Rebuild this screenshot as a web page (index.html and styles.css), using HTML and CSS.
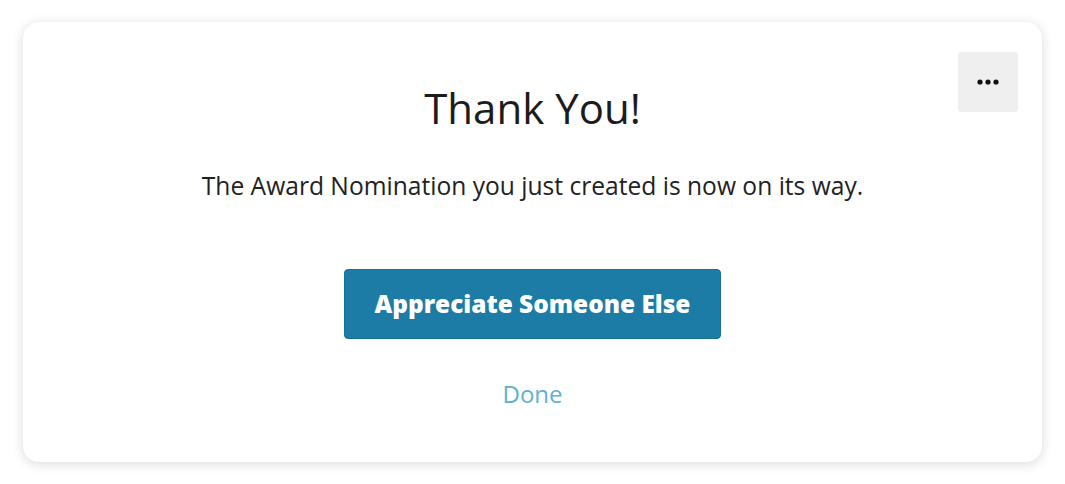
FILE: index.html
```html
<!DOCTYPE html>
<html lang="en">
<head>
  <meta charset="UTF-8">
  <title>Thank You</title>
  <link rel="stylesheet" href="styles.css">
</head>
<body>

  <!-- Confirmation Card -->
  <div class="card">
    <button class="menu-btn" aria-label="More options">
      <svg width="22" height="6" viewBox="0 0 22 6">
        <circle cx="3" cy="3" r="2.6" fill="#111"/>
        <circle cx="11" cy="3" r="2.6" fill="#111"/>
        <circle cx="19" cy="3" r="2.6" fill="#111"/>
      </svg>
    </button>

    <h1 class="title">Thank You!</h1>
    <p class="message">The Award Nomination you just created is now on its way.</p>

    <button class="primary-btn">Appreciate Someone Else</button>
    <a class="done-link" href="#">Done</a>
  </div>

</body>
</html>
```

FILE: styles.css
```css
/* Basic Styling */
* {
  box-sizing: border-box;
}
body {
  margin: 0;
  padding: 22px 23px;
  background-color: #fff;
  font-family: "Open Sans", Arial, sans-serif;
  color: #222;
}

/* Card */
.card {
  position: relative;
  width: 1019px;
  height: 440px;
  background-color: #fff;
  border-radius: 16px;
  box-shadow: 0 2px 12px rgba(0, 0, 0, 0.15);
  display: flex;
  flex-direction: column;
  align-items: center;
  padding-top: 65px;
}

/* Menu button */
.menu-btn {
  position: absolute;
  top: 30px;
  right: 24px;
  width: 60px;
  height: 60px;
  border: none;
  border-radius: 3px;
  background-color: #efefef;
  display: flex;
  align-items: center;
  justify-content: center;
  padding: 0;
}

/* Text */
.title {
  margin: 0;
  font-size: 42px;
  font-weight: 400;
  line-height: 1;
  color: #1c1c1c;
}
.message {
  margin: 42px 0 0;
  font-size: 24.6px;
  line-height: 1.2;
  color: #222;
}

/* Actions */
.primary-btn {
  margin-top: 68px;
  width: 377px;
  height: 70px;
  border: 1px solid #186f96;
  border-radius: 4px;
  background-color: #1c7ca6;
  color: #fff;
  font-family: "Open Sans", Arial, sans-serif;
  font-size: 24.4px;
  font-weight: 800;
}
.done-link {
  margin-top: 38px;
  font-size: 24px;
  color: #5eb0d5;
  text-decoration: none;
}
```
